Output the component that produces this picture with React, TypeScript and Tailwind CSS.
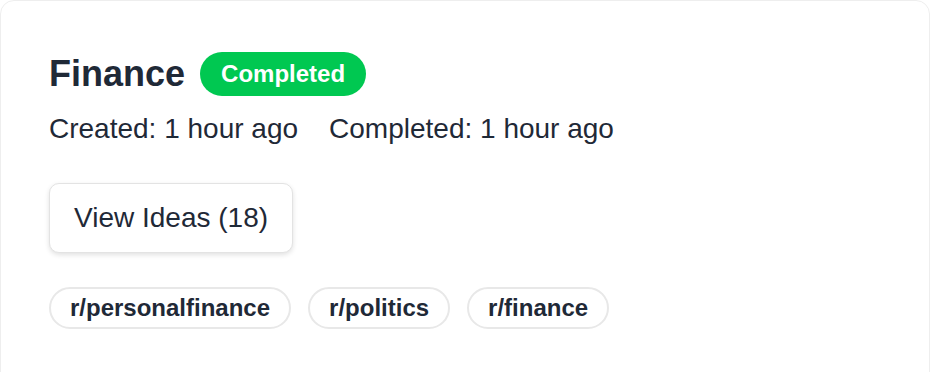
import React from "react";

export default function App() {
  const tags = ["r/personalfinance", "r/politics", "r/finance"];
  return (
    <div
      className="w-[930px] h-[372px] overflow-hidden bg-white"
      style={{ fontFamily: '"Liberation Sans", Arial, Helvetica, sans-serif' }}
    >
      <div className="h-[400px] rounded-[14px] border border-[#eeeeee] bg-white pl-[48px] pt-[51px] flex flex-col items-start">
        <div className="flex items-center gap-[15px]">
          <h2 className="text-[36px] leading-[40px] font-bold text-[#1f2937]">Finance</h2>
          <span className="h-[44px] px-[21px] flex items-center rounded-full bg-[#00c851] text-[24px] leading-[32px] font-bold text-white">
            Completed
          </span>
        </div>
        <div className="mt-[12px] flex gap-[31px] text-[28px] leading-[42px] text-[#1f2937]">
          <span>Created: 1 hour ago</span>
          <span>Completed: 1 hour ago</span>
        </div>
        <button className="mt-[33px] h-[70px] px-[24px] flex items-center rounded-[10px] border border-[#e3e3e3] bg-white text-[28px] leading-[42px] text-[#1f2937] shadow-[0_2px_5px_rgba(0,0,0,0.12)]">
          View Ideas (18)
        </button>
        <div className="mt-[34px] flex gap-[17px]">
          {tags.map((t) => (
            <span
              key={t}
              className="h-[42px] px-[19px] flex items-center rounded-full border-2 border-[#e8e8e8] bg-white text-[24px] leading-[32px] font-bold text-[#1f2937]"
            >
              {t}
            </span>
          ))}
        </div>
      </div>
    </div>
  );
}
